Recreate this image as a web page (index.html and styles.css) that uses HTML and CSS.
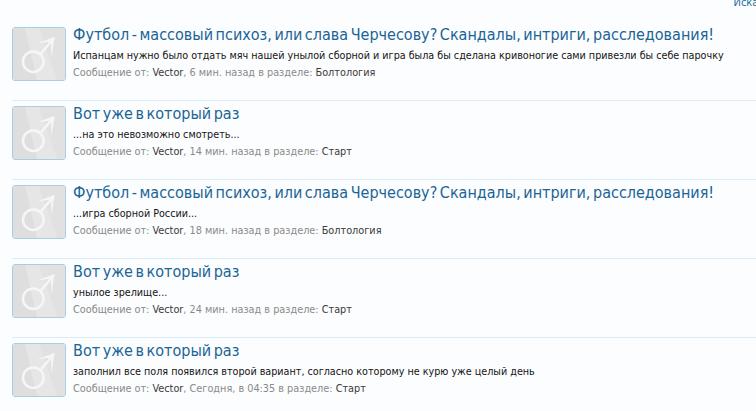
FILE: index.html
```html
<!DOCTYPE html>
<html lang="ru">
<head>
<meta charset="utf-8">
<title>Сообщения</title>
<link rel="stylesheet" href="styles.css">
</head>
<body>
<svg class="defs" width="0" height="0" aria-hidden="true">
  <symbol id="male" viewBox="0 0 52 52">
    <rect width="52" height="52" fill="#e1e1e1"/>
    <path d="M0 0H26L44 52H0Z" fill="#e6e6e6"/>
    <path d="M0 0H12L24 52H0Z" fill="#dedede"/>
    <circle cx="20.300" cy="33.700" r="10.300" fill="none" stroke="#f6f6f6" stroke-width="2.500"/>
    <path d="M27.500 26L41 10" fill="none" stroke="#f6f6f6" stroke-width="2.500"/>
    <path d="M23.700 15.500L41.500 9L38.500 30L38 13.500Z" fill="#f6f6f6"/>
  </symbol>
</svg>
<div class="search"><a class="search-link">Искать</a></div>
<main class="list">
  <article class="row">
    <div class="avatar"><svg><use href="#male"/></svg></div>
    <div class="body">
      <h3 class="title">Футбол - массовый психоз, или слава Черчесову? Скандалы, интриги, расследования!</h3>
      <p class="text">Испанцам нужно было отдать мяч нашей унылой сборной и игра была бы сделана кривоногие сами привезли бы себе парочку</p>
      <p class="meta">Сообщение от: <b class="strong">Vector</b>, 6 мин. назад в разделе: <b class="strong">Болтология</b></p>
    </div>
  </article>
  <article class="row">
    <div class="avatar"><svg><use href="#male"/></svg></div>
    <div class="body">
      <h3 class="title">Вот уже в который раз</h3>
      <p class="text">...на это невозможно смотреть...</p>
      <p class="meta">Сообщение от: <b class="strong">Vector</b>, 14 мин. назад в разделе: <b class="strong">Старт</b></p>
    </div>
  </article>
  <article class="row">
    <div class="avatar"><svg><use href="#male"/></svg></div>
    <div class="body">
      <h3 class="title">Футбол - массовый психоз, или слава Черчесову? Скандалы, интриги, расследования!</h3>
      <p class="text">...игра сборной России...</p>
      <p class="meta">Сообщение от: <b class="strong">Vector</b>, 18 мин. назад в разделе: <b class="strong">Болтология</b></p>
    </div>
  </article>
  <article class="row">
    <div class="avatar"><svg><use href="#male"/></svg></div>
    <div class="body">
      <h3 class="title">Вот уже в который раз</h3>
      <p class="text">унылое зрелище...</p>
      <p class="meta">Сообщение от: <b class="strong">Vector</b>, 24 мин. назад в разделе: <b class="strong">Старт</b></p>
    </div>
  </article>
  <article class="row">
    <div class="avatar"><svg><use href="#male"/></svg></div>
    <div class="body">
      <h3 class="title">Вот уже в который раз</h3>
      <p class="text">заполнил все поля появился второй вариант, согласно которому не курю уже целый день</p>
      <p class="meta">Сообщение от: <b class="strong">Vector</b>, Сегодня, в 04:35 в разделе: <b class="strong">Старт</b></p>
    </div>
  </article>
</main>
</body>
</html>
```
FILE: styles.css
```css
html, body {
  margin: 0;
  padding: 0;
  height: 100%;
  overflow: hidden;
}
body {
  background: #fcfdfe;
  font-family: "DejaVu Sans", Verdana, sans-serif;
  font-stretch: condensed;
  color: #141414;
}
.defs {
  position: absolute;
}
.search {
  height: 8px;
  overflow: hidden;
  display: flex;
  justify-content: flex-end;
}
.search-link {
  font-size: 11px;
  line-height: 11px;
  color: #1f6f9f;
  margin-top: -3px;
  margin-right: -14px;
}
.list {
  padding: 0 0 0 12px;
  margin-top: 1px;
}
.row {
  display: flex;
  gap: 7px;
  padding-top: 5px;
  box-sizing: border-box;
  border-bottom: 1px solid #d9ebf6;
  height: 79px;
}
.row:first-child {
  height: 92px;
  padding-top: 18px;
}
.row:last-child {
  border-bottom: 0;
}
.avatar {
  flex: none;
  width: 54px;
  height: 54px;
  box-sizing: border-box;
  border: 1px solid #a9cde4;
  border-radius: 3px;
  background: #f7f9fb;
  overflow: hidden;
}
.avatar svg {
  display: block;
  width: 52px;
  height: 52px;
}
.body {
  min-width: 0;
  white-space: nowrap;
}
.title {
  margin: -2px 0 0;
  font-size: 16px;
  line-height: 20px;
  font-weight: 400;
  word-spacing: -2px;
  color: #1a6496;
}
.text {
  margin: 4px 0 0;
  font-size: 10.700px;
  line-height: 14px;
  color: #141414;
}
.meta {
  margin: 3px 0 0;
  font-size: 10.800px;
  line-height: 14px;
  color: #8a8a8a;
}
.strong {
  font-weight: 400;
  color: #3a3a3a;
}
```
